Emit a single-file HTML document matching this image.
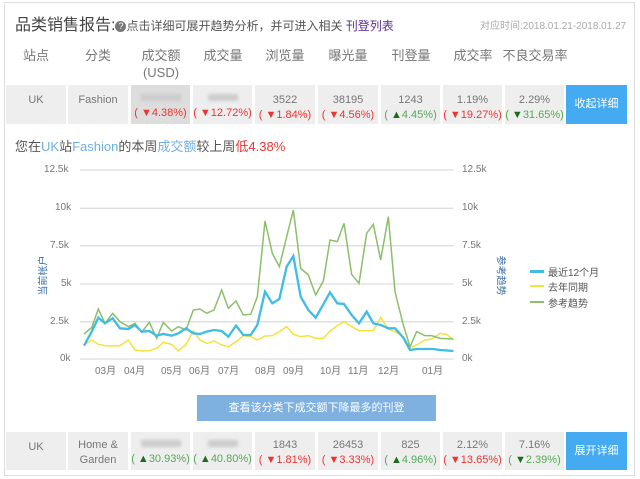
<!DOCTYPE html>
<html><head><meta charset="utf-8"><style>
*{margin:0;padding:0;box-sizing:border-box}
body{width:640px;height:479px;background:#fff;font-family:"Liberation Sans","Noto Sans CJK SC",sans-serif;position:relative;overflow:hidden;color:#555}
.box{position:absolute;left:4px;top:2px;width:631px;height:474px;border:1px solid #ddd}
.abs{position:absolute;white-space:nowrap}
.hd{position:absolute;top:47px;font-size:13px;color:#777;text-align:center;line-height:17px}
.c{position:absolute;background:#eee;font-size:11px;color:#777;text-align:center;line-height:15px}
.r{color:#e33}.g{color:#5a5}.dg{color:#1a6e1a}
.blur{display:inline-block;width:40px;height:7px;background:#ccc;filter:blur(1.5px);margin-top:4px}
.btn{position:absolute;background:#44aaf2;color:#fff;font-size:11px;text-align:center}
.ax{position:absolute;font-size:10px;color:#777}
.q{display:inline-block;width:11px;height:11px;border-radius:50%;background:#777;color:#fff;font-size:9px;line-height:11px;text-align:center;vertical-align:1px}
</style></head><body>
<div class="box"></div>
<div class="abs" style="left:15px;top:11px;font-size:16px;color:#444">品类销售报告:<span style="font-size:12px;color:#555"><span class="q">?</span>点击详细可展开趋势分析，并可进入相关 <span style="color:#5a2d91">刊登列表</span></span></div>
<div class="abs" style="left:480px;top:17px;font-size:10px;color:#aaa">对应时间:2018.01.21-2018.01.27</div>

<div class="hd" style="left:6px;width:60px">站点</div>
<div class="hd" style="left:68px;width:60px">分类</div>
<div class="hd" style="left:131px;width:60px">成交额<br>(USD)</div>
<div class="hd" style="left:193px;width:60px">成交量</div>
<div class="hd" style="left:255px;width:60px">浏览量</div>
<div class="hd" style="left:318px;width:60px">曝光量</div>
<div class="hd" style="left:381px;width:60px">刊登量</div>
<div class="hd" style="left:443px;width:60px">成交率</div>
<div class="hd" style="left:500px;width:70px">不良交易率</div>

<div class="c" style="left:6px;top:85px;width:60px;height:39px;padding-top:8px">UK</div>
<div class="c" style="left:68px;top:85px;width:60px;height:39px;padding-top:8px">Fashion</div>
<div class="c" style="left:131px;top:85px;width:59px;height:39px;padding-top:5px;background:#ddd"><span class="blur"></span><br><span class="r">( ▼4.38%)</span></div>
<div class="c" style="left:193px;top:85px;width:59px;height:39px;padding-top:5px"><span class="blur" style="width:30px"></span><br><span class="r">( ▼12.72%)</span></div>
<div class="c" style="left:255px;top:85px;width:60px;height:39px;padding-top:8px">3522<br><span class="r">( ▼1.84%)</span></div>
<div class="c" style="left:318px;top:85px;width:60px;height:39px;padding-top:8px">38195<br><span class="r">( ▼4.56%)</span></div>
<div class="c" style="left:381px;top:85px;width:59px;height:39px;padding-top:8px">1243<br><span class="g">( <span class="dg">▲</span>4.45%)</span></div>
<div class="c" style="left:443px;top:85px;width:59px;height:39px;padding-top:8px">1.19%<br><span class="r">( ▼19.27%)</span></div>
<div class="c" style="left:505px;top:85px;width:59px;height:39px;padding-top:8px">2.29%<br><span class="g">( <span class="dg">▼</span>31.65%)</span></div>
<div class="btn" style="left:566px;top:85px;width:61px;height:39px;line-height:39px">收起详细</div>

<div class="abs" style="left:15px;top:136px;font-size:13px;color:#555">您在<span style="color:#6fb0e0">UK</span>站<span style="color:#6fb0e0">Fashion</span>的本周<span style="color:#6fb0e0">成交额</span>较上周<span class="r">低4.38%</span></div>

<div class="ax" style="left:44px;top:164px">12.5k</div>
<div class="ax" style="left:55px;top:202px">10k</div>
<div class="ax" style="left:50px;top:240px">7.5k</div>
<div class="ax" style="left:61px;top:278px">5k</div>
<div class="ax" style="left:50px;top:316px">2.5k</div>
<div class="ax" style="left:60px;top:353px">0k</div>
<div class="ax" style="left:462px;top:164px">12.5k</div>
<div class="ax" style="left:462px;top:202px">10k</div>
<div class="ax" style="left:462px;top:240px">7.5k</div>
<div class="ax" style="left:462px;top:278px">5k</div>
<div class="ax" style="left:462px;top:316px">2.5k</div>
<div class="ax" style="left:462px;top:353px">0k</div>
<div class="abs" style="left:22px;top:268px;font-size:10px;color:#3a6ea5;transform:rotate(-90deg)">当前帐户</div>
<div class="abs" style="left:482px;top:268px;font-size:10px;color:#3a6ea5;transform:rotate(90deg)">参考趋势</div>

<div class="ax" style="left:95px;top:362px">03月</div>
<div class="ax" style="left:124px;top:362px">04月</div>
<div class="ax" style="left:161px;top:362px">05月</div>
<div class="ax" style="left:189px;top:362px">06月</div>
<div class="ax" style="left:218px;top:362px">07月</div>
<div class="ax" style="left:255px;top:362px">08月</div>
<div class="ax" style="left:283px;top:362px">09月</div>
<div class="ax" style="left:320px;top:362px">10月</div>
<div class="ax" style="left:348px;top:362px">11月</div>
<div class="ax" style="left:378px;top:362px">12月</div>
<div class="ax" style="left:422px;top:362px">01月</div>

<svg class="abs" style="left:60px;top:155px" width="420" height="225" viewBox="0 0 1260 675">
<g stroke="#ddd" stroke-width="4"><line x1="60" y1="45" x2="1180" y2="45"/><line x1="60" y1="160" x2="1180" y2="160"/><line x1="60" y1="272" x2="1180" y2="272"/><line x1="60" y1="387" x2="1180" y2="387"/><line x1="60" y1="500" x2="1180" y2="500"/><line x1="60" y1="612" x2="1180" y2="612"/></g>
<polyline fill="none" stroke="#f3e33a" stroke-width="4.5" points="72,570 95,555 115,568 135,572 158,573 180,572 205,555 225,585 245,588 268,587 290,580 310,562 335,568 355,588 378,568 400,527 420,555 440,565 462,558 485,570 505,575 528,560 550,542 572,545 592,555 615,543 637,542 658,530 680,515 700,538 722,545 745,542 767,550 790,550 810,528 832,512 852,500 875,515 897,527 920,527 940,527 962,487 985,522 1005,530 1030,545 1050,578 1070,570 1095,555 1115,552 1140,535 1160,538 1180,555"/>
<polyline fill="none" stroke="#8bbf6a" stroke-width="4.5" points="72,537 95,518 115,462 135,505 158,475 180,500 205,515 225,505 245,532 268,502 290,550 310,502 335,528 355,515 378,525 400,465 420,462 440,475 462,465 485,405 505,460 528,438 550,480 572,478 592,425 615,198 637,295 658,335 680,245 700,165 722,340 745,360 767,420 790,378 810,255 832,260 852,205 875,358 897,385 920,235 940,208 962,315 985,185 1005,410 1030,510 1050,575 1070,530 1095,542 1115,542 1140,550 1180,552"/>
<polyline fill="none" stroke="#3fbde6" stroke-width="7" points="72,572 95,530 115,488 135,505 158,490 180,520 205,522 225,510 245,530 268,528 290,542 310,537 335,542 355,535 378,520 400,535 420,537 440,530 462,525 485,528 505,545 528,512 550,540 572,540 592,510 615,410 637,445 658,432 680,335 700,303 722,425 745,465 767,488 790,448 810,412 832,445 852,447 875,480 897,505 920,470 940,505 962,510 985,520 1005,520 1030,548 1050,585 1070,582 1095,582 1120,582 1140,585 1180,588"/>
</svg>

<div class="abs" style="left:530px;top:270px;width:14px;height:3px;background:#3fbde6"></div>
<div class="abs" style="left:548px;top:264px;font-size:10px;color:#555">最近12个月</div>
<div class="abs" style="left:530px;top:285px;width:14px;height:2px;background:#f3e33a"></div>
<div class="abs" style="left:548px;top:279px;font-size:10px;color:#555">去年同期</div>
<div class="abs" style="left:530px;top:301px;width:14px;height:2px;background:#8bbf6a"></div>
<div class="abs" style="left:548px;top:295px;font-size:10px;color:#555">参考趋势</div>

<div class="btn" style="left:197px;top:395px;width:239px;height:26px;line-height:26px;background:#7eb0e0;font-size:11px">查看该分类下成交额下降最多的刊登</div>

<div class="c" style="left:6px;top:432px;width:60px;height:38px;padding-top:8px">UK</div>
<div class="c" style="left:68px;top:432px;width:60px;height:38px;padding-top:6px">Home &amp;<br>Garden</div>
<div class="c" style="left:131px;top:432px;width:59px;height:38px;padding-top:4px"><span class="blur"></span><br><span class="g">( <span class="dg">▲</span>30.93%)</span></div>
<div class="c" style="left:193px;top:432px;width:59px;height:38px;padding-top:4px"><span class="blur" style="width:30px"></span><br><span class="g">( <span class="dg">▲</span>40.80%)</span></div>
<div class="c" style="left:255px;top:432px;width:60px;height:38px;padding-top:6px">1843<br><span class="r">( ▼1.81%)</span></div>
<div class="c" style="left:318px;top:432px;width:60px;height:38px;padding-top:6px">26453<br><span class="r">( ▼3.33%)</span></div>
<div class="c" style="left:381px;top:432px;width:59px;height:38px;padding-top:6px">825<br><span class="g">( <span class="dg">▲</span>4.96%)</span></div>
<div class="c" style="left:443px;top:432px;width:59px;height:38px;padding-top:6px">2.12%<br><span class="r">( ▼13.65%)</span></div>
<div class="c" style="left:505px;top:432px;width:59px;height:38px;padding-top:6px">7.16%<br><span class="g">( <span class="dg">▼</span>2.39%)</span></div>
<div class="btn" style="left:566px;top:432px;width:61px;height:38px;line-height:38px">展开详细</div>
</body></html>
